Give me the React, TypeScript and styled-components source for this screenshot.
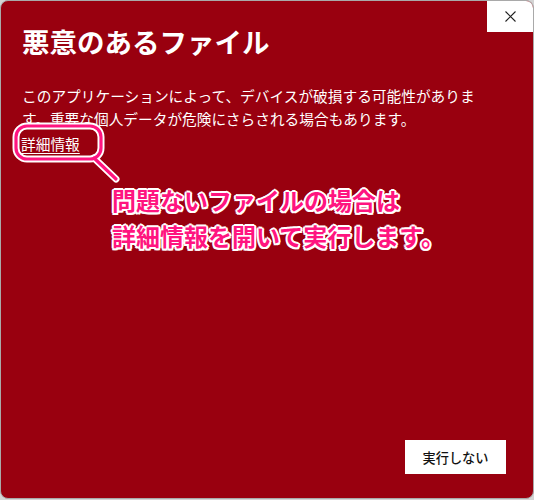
import styled, { createGlobalStyle } from 'styled-components';

const GlobalStyle = createGlobalStyle`
  html, body {
    margin: 0;
    padding: 0;
    background: #d4d4d4;
    width: 534px;
    height: 500px;
    overflow: hidden;
  }
  body {
    font-family: 'Noto Sans CJK JP', 'Noto Sans', sans-serif;
  }
`;

const Window = styled.div`
  position: relative;
  box-sizing: border-box;
  width: 534px;
  height: 499px;
  display: flex;
  flex-direction: column;
  padding: 22px 27px 24px 21px;
  background: #99000f;
  border: 1px solid #a9a9a9;
  border-radius: 8px;
  overflow: hidden;
  color: #ffffff;
`;

const CloseButton = styled.button`
  position: absolute;
  top: 0;
  right: 0;
  width: 46px;
  height: 31px;
  border: none;
  background: #ffffff;
  display: flex;
  align-items: center;
  justify-content: center;
  padding: 0;
`;

const Title = styled.h1`
  margin: 0;
  font-size: 27.5px;
  line-height: 36px;
  font-weight: 700;
  letter-spacing: 0;
`;

const Message = styled.p`
  margin: 25px 0 0;
  width: 462px;
  font-size: 14.7px;
  line-height: 23px;
  font-weight: 400;
`;

const MoreInfo = styled.a`
  display: block;
  width: max-content;
  margin: 2px 0 0 -1px;
  font-size: 14.7px;
  line-height: 23px;
  color: #ffffff;
  text-decoration: underline;
  text-underline-offset: 3px;
`;

const Callout = styled.svg`
  position: absolute;
  left: 0;
  top: 0;
  pointer-events: none;
`;

const Note = styled.div`
  position: absolute;
  left: 111px;
  top: 181px;
  font-size: 24px;
  line-height: 36px;
  font-weight: 700;
  color: #ff1580;
  text-shadow:
    2px 0 0 #fff, -2px 0 0 #fff, 0 2px 0 #fff, 0 -2px 0 #fff,
    1.5px 1.5px 0 #fff, -1.5px 1.5px 0 #fff, 1.5px -1.5px 0 #fff, -1.5px -1.5px 0 #fff;
`;

const Footer = styled.div`
  margin-top: auto;
  display: flex;
  justify-content: flex-end;
`;

const Button = styled.button`
  width: 101px;
  height: 34px;
  border: none;
  border-radius: 0;
  background: #ffffff;
  color: #111111;
  font-family: 'Noto Sans CJK JP', sans-serif;
  font-size: 13.2px;
  font-weight: 500;
  padding: 0;
`;

function App() {
  return (
    <>
      <GlobalStyle />
      <Window>
        <CloseButton aria-label="閉じる">
          <svg width="11" height="11" viewBox="0 0 11 11">
            <path d="M0.5 0.5 L10.5 10.5 M10.5 0.5 L0.5 10.5" stroke="#222" strokeWidth="1.1" fill="none" />
          </svg>
        </CloseButton>
        <Title>悪意のあるファイル</Title>
        <Message>
          このアプリケーションによって、デバイスが破損する可能性があります。重要な個人データが危険にさらされる場合もあります。
        </Message>
        <MoreInfo href="#">詳細情報</MoreInfo>
        <Footer>
          <Button>実行しない</Button>
        </Footer>
        <Callout width="140" height="190" viewBox="0 0 140 190">
          <g fill="none" strokeLinecap="round" strokeLinejoin="round">
            <rect x="15" y="125" width="85" height="33" rx="11" stroke="#fff" strokeWidth="7" />
            <line x1="93" y1="157" x2="115" y2="178" stroke="#fff" strokeWidth="7" />
            <rect x="15" y="125" width="85" height="33" rx="11" stroke="#ff1580" strokeWidth="3.2" />
            <line x1="93" y1="157" x2="115" y2="178" stroke="#ff1580" strokeWidth="3.2" />
          </g>
        </Callout>
        <Note>
          問題ないファイルの場合は
          <br />
          詳細情報を開いて実行します。
        </Note>
      </Window>
    </>
  );
}

export default App;
